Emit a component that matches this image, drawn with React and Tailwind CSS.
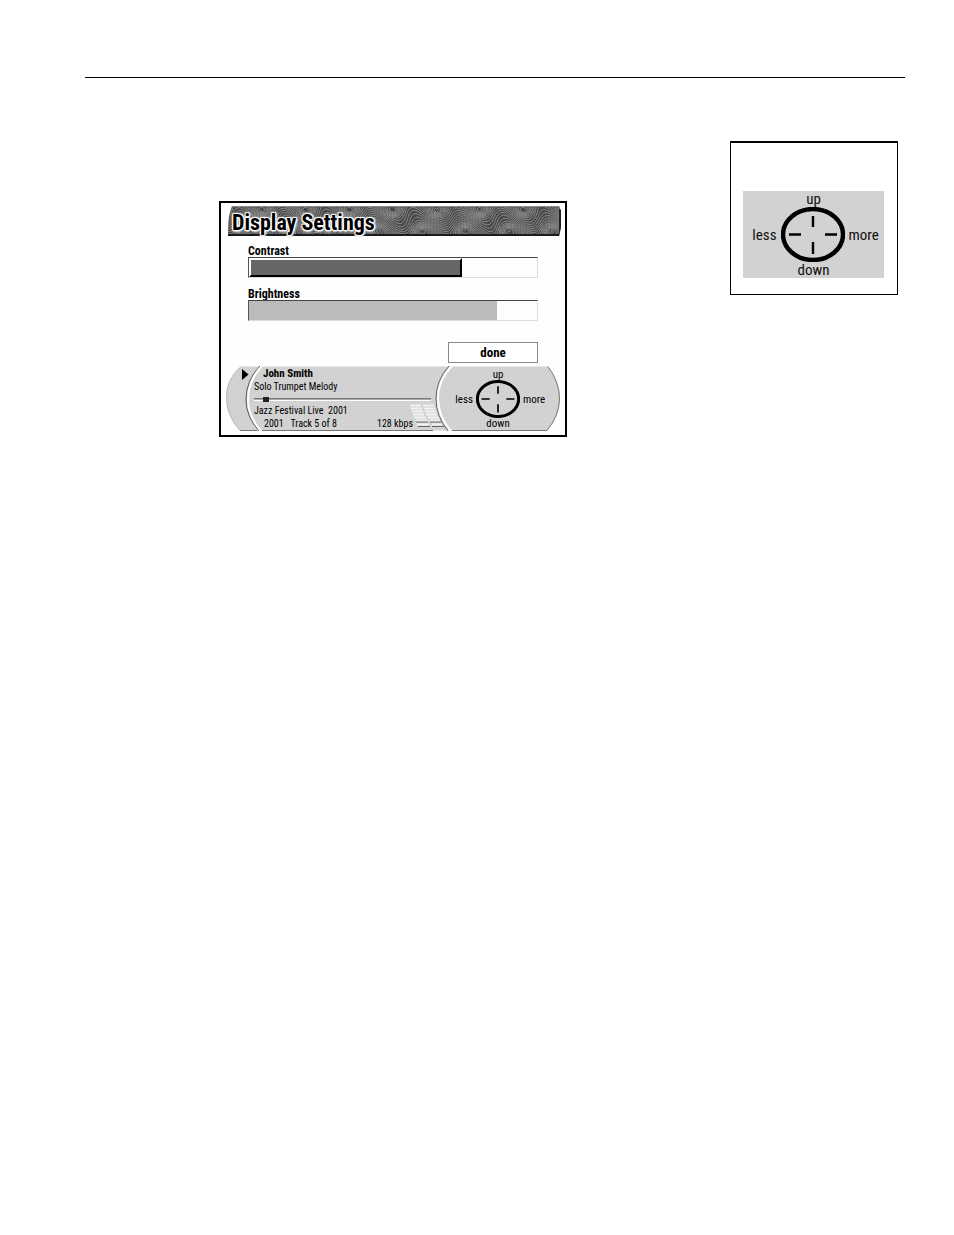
import React, { useState } from 'react';

const HEADER_W = 333;
const HEADER_H = 30;
const PERIOD = 43.5;

// distance to the nearest repeat of a point along x
const wrap = (dx) => dx - PERIOD * Math.round(dx / PERIOD);

// flowing waves, with rings under the crests and over the dips
const field = (x, y) => {
    const wave = 7 * Math.cos((2 * Math.PI * (x - 165 - 0.5 * (y - 5))) / PERIOD) + 1.5 * Math.sin(x / 17 + y / 6);
    const top = Math.exp(-((wrap(x - 165) ** 2) / 60 + ((y - 5) ** 2) / 22));
    const bottom = Math.exp(-((wrap(x - 193) ** 2) / 60 + ((y - 24) ** 2) / 22));
    return y - wave - 11 * top + 11 * bottom;
};

const buildContours = () => {
    const cell = 1.5;
    let d = '';

    for (let level = -25; level < 50; level += 2.5) {
        for (let x = 0; x < HEADER_W; x += cell) {
            for (let y = 0; y < HEADER_H; y += cell) {
                const corners = [[x, y], [x + cell, y], [x + cell, y + cell], [x, y + cell]];
                const values = corners.map(([cx, cy]) => field(cx, cy) - level);
                const hits = [];
                for (let i = 0; i < 4; i++) {
                    const j = (i + 1) % 4;
                    if (values[i] > 0 !== values[j] > 0) {
                        const t = values[i] / (values[i] - values[j]);
                        const px = corners[i][0] + t * (corners[j][0] - corners[i][0]);
                        const py = corners[i][1] + t * (corners[j][1] - corners[i][1]);
                        hits.push(`${px.toFixed(1)} ${py.toFixed(1)}`);
                    }
                }
                if (hits.length >= 2) d += `M${hits[0]}L${hits[1]}`;
            }
        }
    }
    return d;
};

const contours = buildContours();

const TitleBar = () => (
    <header className="relative h-[30px] ml-[7px] mr-1">
        <svg className="absolute inset-0 w-full h-full" viewBox="0 0 333 30" preserveAspectRatio="none" aria-hidden="true">
            <clipPath id="title-shape">
                <path d="M4 0H331L333 5V21L331 30H0V24L1 10Z" />
            </clipPath>
            <g clipPath="url(#title-shape)">
                <rect width="333" height="30" fill="#484848" />
                <path d={contours} stroke="#8c8c8c" strokeWidth="1" fill="none" />
                <path d="M3 0.5H332" stroke="#8a8a8a" />
                <path d="M0 29H333" stroke="#111" strokeWidth="2" strokeOpacity="0.85" />
                <path d="M332 3V28" stroke="#222" strokeWidth="2" />
            </g>
        </svg>
        <h1 className="relative pl-1 text-[22px] leading-[33px] font-bold [text-shadow:0_0_1px_#fff,1px_1px_1px_#fff,-1px_-1px_1px_#fff,1px_-1px_1px_#fff,-1px_1px_1px_#fff,0_2px_2px_#ddd,2px_0_2px_#ddd]">
            Display Settings
        </h1>
    </header>
);

const LevelSlider = ({ id, label, value, onChange, raised }) => (
    <div>
        <label htmlFor={id} className="block text-[12px] leading-[12px] font-bold">{label}</label>
        <div className="relative h-[21px] border border-t-[#444] border-l-[#555] border-r-[#ddd] border-b-[#ddd] bg-[#fdfdfd]">
            <div
                className={
                    raised
                        ? 'h-full bg-[#666] border-2 border-t-white border-l-white border-r-black border-b-black'
                        : 'h-full bg-[#bbb]'
                }
                style={{ width: `${value}%` }}
            />
            <input
                id={id}
                type="range"
                min="0"
                max="100"
                value={value}
                onChange={(e) => onChange(Number(e.target.value))}
                className="absolute inset-0 w-full h-full opacity-0 cursor-pointer"
            />
        </div>
    </div>
);

const Dial = ({ className }) => (
    <svg className={className} viewBox="0 0 64 55" aria-hidden="true">
        <ellipse cx="32" cy="27.5" rx="30" ry="25.5" fill="none" stroke="#000" strokeWidth="4.4" />
        <path d="M32 9V20M32 35V47M8 27.5H20M44 27.5H56" stroke="#000" strokeWidth="2.4" fill="none" />
    </svg>
);

const CalloutPad = () => (
    <div className="flex flex-col items-center bg-[#d2d2d2] h-[87px] text-[15px] leading-[16px] text-[#111]">
        <span>up</span>
        <div className="flex items-center justify-center gap-1 w-full">
            <span className="w-7 text-right">less</span>
            <Dial className="w-16 h-[55px] shrink-0" />
            <span className="w-[30px]">more</span>
        </div>
        <span>down</span>
    </div>
);

const PlayerPad = () => (
    <div className="relative flex flex-col items-center w-[124px] pt-[3px] text-[11px] leading-[11px]">
        <span>up</span>
        <div className="flex items-center justify-center gap-[3px] w-full">
            <span className="w-[22px] text-right">less</span>
            <Dial className="w-11 h-[38px] shrink-0" />
            <span className="w-[22px]">more</span>
        </div>
        <span>down</span>
    </div>
);

const PlayerBackdrop = () => (
    <svg className="absolute inset-0 w-full h-full" viewBox="0 0 334 66" preserveAspectRatio="none" aria-hidden="true">
        <path d="M15 0.5H322Q334 16 334 33Q334 50 321 64.5H14Q0 50 0 32Q0 13 15 0.5Z" fill="#d2d2d2" />
        <path d="M15 0.5Q0 13 0.5 32Q1 50 14 64.5" fill="none" stroke="#bbb" />
        <path d="M14 64.5H31M36 64.5H207M226 64.5H321Q333 50 333.5 33Q333.5 16 322 0.5" fill="none" stroke="#777" />
        {/* left divider */}
        <path d="M34 0Q20 14 20 34Q20 50 33 65" fill="none" stroke="#555" />
        <path d="M36 0Q22 14 22 34Q22 50 35 65" fill="none" stroke="#fff" strokeWidth="2" />
        {/* level meter */}
        <g stroke="#f2f2f2" strokeWidth="2">
            <path d="M184 39.5H195M197 39.5H208M185 42.5H196M198 42.5H209M186 45.5H197M199 45.5H210M187 48.5H198M200 48.5H211M188 51.5H200M202 51.5H213" />
            <path d="M190 54.5H202M204 54.5H214M191 58.5H203M206 58.5H216" />
        </g>
        <path d="M190 56H202M204 56H215M192 60.5H204M206 60.5H218" stroke="#666" />
        {/* right divider */}
        <path d="M223 0Q210 14 210 33Q210 50 222 65" fill="none" stroke="#666" />
        <path d="M226 0Q212 14 212 33Q212 50 225 65" fill="none" stroke="#fff" strokeWidth="2" />
        <path d="M16 3L22.5 8.5L16 14Z" fill="#000" />
    </svg>
);

const SeekBar = () => {
    const [position, setPosition] = useState(6);

    return (
        <div className="relative flex items-center h-3">
            <div className="w-full h-[3px] border-t border-t-[#777] border-b border-b-white bg-[#aaa]" />
            <div className="absolute w-[6px] h-[5px] bg-[#222]" style={{ left: `${position - 1}%` }} />
            <input
                type="range"
                aria-label="Track position"
                value={position}
                onChange={(e) => setPosition(Number(e.target.value))}
                className="absolute inset-0 w-full h-full opacity-0 cursor-pointer"
            />
        </div>
    );
};

const Player = () => (
    <footer className="relative flex justify-between h-[66px] mx-[5px] mt-[3px] text-[10px] leading-[13px]">
        <PlayerBackdrop />
        <div className="relative w-[177px] ml-7 pt-px">
            <p className="pl-[9px] text-[11px] leading-[13px] font-bold">John Smith</p>
            <p>Solo Trumpet Melody</p>
            <SeekBar />
            <p className="leading-[12px]">Jazz Festival Live&nbsp; 2001</p>
            <p className="flex justify-between pl-[10px] pr-[18px]">
                <span>2001 &nbsp; Track 5 of 8</span>
                <span>128 kbps</span>
            </p>
        </div>
        <PlayerPad />
    </footer>
);

const DisplaySettings = () => {
    const [contrast, setContrast] = useState(74);
    const [brightness, setBrightness] = useState(86);

    return (
        <section className="w-[348px] mt-[60px] pt-[3px] pb-[3px] border-2 border-black bg-[#fefefe]">
            <TitleBar />
            <form className="flex flex-col gap-[10px] mt-[9px] mx-[27px]" onSubmit={(e) => e.preventDefault()}>
                <LevelSlider id="contrast" label="Contrast" value={contrast} onChange={setContrast} raised />
                <LevelSlider id="brightness" label="Brightness" value={brightness} onChange={setBrightness} />
                <button type="submit" className="self-end w-[90px] h-[21px] mt-[11px] border border-[#888] bg-white text-[13px] leading-[20px] font-bold">
                    done
                </button>
            </form>
            <Player />
        </section>
    );
};

const App = () => {
    return (
        <main className="min-h-screen bg-white pt-[77px] pl-[85px] pr-[49px] pb-16 text-black font-['Roboto_Condensed','Roboto',sans-serif]">
            <hr className="border-t border-black" />
            <div className="flex items-start justify-between mt-[63px] pl-[134px] pr-[7px]">
                <DisplaySettings />
                <aside className="w-[168px] pt-12 pb-4 pl-3 pr-[13px] border border-t-2 border-black">
                    <CalloutPad />
                </aside>
            </div>
        </main>
    );
};

export default App;
